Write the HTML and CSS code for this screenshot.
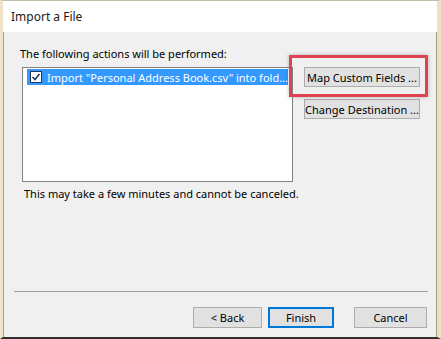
FILE: index.html
```html
<!DOCTYPE html>
<html lang="en">
<head>
    <meta charset="UTF-8">
    <title>Import a File</title>
    <link rel="stylesheet" href="styles.css">
</head>
<body>
    <div class="window">
        <div class="titlebar">Import a File</div>
        <div class="body">
            <div class="label">The following actions will be performed:</div>
            <div class="main">
                <div class="listbox">
                    <div class="row selected">
                        <span class="check">
                            <svg width="10" height="10" viewBox="0 0 10 10">
                                <path d="M1.5 5 L4 7.5 L8.5 2" fill="none" stroke="#1e3a5a" stroke-width="1.6"/>
                            </svg>
                        </span>
                        <span class="row-text">Import "Personal Address Book.csv" into fold...</span>
                    </div>
                </div>
                <div class="side">
                    <button class="btn wide">Map Custom Fields ...</button>
                    <button class="btn wide">Change Destination ...</button>
                </div>
            </div>
            <div class="note">This may take a few minutes and cannot be canceled.</div>
            <div class="spacer"></div>
            <div class="separator"></div>
            <div class="footer">
                <button class="btn">&lt; Back</button>
                <button class="btn default">Finish</button>
                <button class="btn cancel">Cancel</button>
            </div>
        </div>
        <div class="highlight"></div>
    </div>
</body>
</html>
```

FILE: styles.css
```css
body {
    margin: 0;
    background: #f0f0f0;
    font-family: "Noto Sans", "Open Sans", sans-serif;
    font-size: 11px;
    color: #000;
}
.window {
    position: relative;
    width: 441px;
    height: 339px;
    box-sizing: border-box;
    border-top: 1px solid #c4bcaa;
    border-left: 3px solid #f0e4c8;
    border-right: 4px solid #ece0c4;
    border-bottom: 2px solid #2e2e2e;
    box-shadow: inset 1px 0 #a89c84, inset -1px 0 #a89c84;
    display: flex;
    flex-direction: column;
    background: #f0f0f0;
}
.titlebar {
    height: 31px;
    background: #fff;
    padding-left: 8px;
    font-size: 12px;
    line-height: 31px;
    color: #1a1a1a;
    flex-shrink: 0;
}
.body {
    flex: 1;
    display: flex;
    flex-direction: column;
    padding: 14px 9px 0 11px;
}
.label {
    padding-left: 6px;
    line-height: 16px;
    height: 21px;
}
.main {
    display: flex;
    align-items: flex-start;
    gap: 11px;
}
.listbox {
    height: 111px;
    border: 1px solid #828282;
    background: #fff;
    padding: 1px 4px;
    box-sizing: content-box;
    margin-left: 8px;
    width: 261px;
}
.row {
    height: 16px;
    display: flex;
    align-items: center;
}
.row.selected {
    background: #3399ff;
    color: #fff;
}
.check {
    width: 10px;
    height: 10px;
    margin-left: 3px;
    border: 1px solid #1e3a5a;
    background: #fff;
    display: flex;
    flex-shrink: 0;
}
.row-text {
    margin-left: 5px;
    white-space: nowrap;
}
.side {
    display: flex;
    flex-direction: column;
    gap: 12px;
}
.btn {
    font-family: inherit;
    font-size: 11px;
    height: 20px;
    padding: 0;
    background: #e1e1e1;
    border: 1px solid #adadad;
    color: #000;
    box-sizing: border-box;
    white-space: nowrap;
}
.btn.wide {
    width: 116px;
}
.note {
    margin-top: 4px;
    padding-left: 10px;
    line-height: 16px;
}
.spacer {
    flex: 1;
}
.separator {
    height: 1px;
    background: #a0a0a0;
    margin: 0 0 15px 0;
    width: 414px;
}
.footer {
    display: flex;
    justify-content: flex-end;
    gap: 6px;
    padding-right: 1px;
    margin-bottom: 9px;
}
.footer .btn {
    width: 69px;
    height: 21px;
}
.footer .btn.default {
    border: 2px solid #0078d7;
    width: 66px;
}
.footer .btn.cancel {
    width: 73px;
    margin-left: 14px;
}
.highlight {
    position: absolute;
    left: 286px;
    top: 54px;
    width: 133px;
    height: 36px;
    border: 3px solid #e0434f;
    box-shadow: 0 0 4px rgba(0, 0, 0, 0.25);
}
```
